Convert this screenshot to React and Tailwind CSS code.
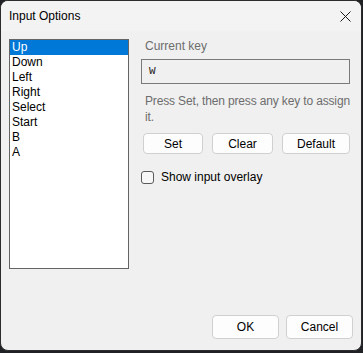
const KEYS = ["Up", "Down", "Left", "Right", "Select", "Start", "B", "A"];

function CloseGlyph() {
  return (
    <svg width="11" height="11" viewBox="0 0 11 11" className="block">
      <path d="M0.5 0.5 L10.5 10.5 M10.5 0.5 L0.5 10.5" stroke="#1a1a1a" strokeWidth="1" fill="none" />
    </svg>
  );
}

function Btn({ children, className = "" }) {
  return (
    <button
      className={`flex items-center justify-center rounded-[4px] border border-[#d0d0d0] bg-[#fdfdfd] text-[12px] text-black ${className}`}
    >
      {children}
    </button>
  );
}

export default function App() {
  const selected = 0;
  return (
    <div
      className="h-[353px] w-[363px] bg-[#202124]"
      style={{ fontFamily: '"Liberation Sans", Arial, sans-serif' }}
    >
      <div className="flex h-[351px] w-[362px] flex-col overflow-hidden rounded-[8px] border border-[#2c2c2c] bg-[#f0f0f0]">
        {/* title bar */}
        <div className="flex h-[30px] shrink-0 items-center justify-between bg-[#f3f3f3] pl-2 pr-[10px]">
          <span className="text-[12px] text-black">Input Options</span>
          <CloseGlyph />
        </div>

        {/* body */}
        <div className="flex flex-1 flex-col">
          <div className="flex pl-2 pt-2">
            <ul className="h-[230px] w-[120px] shrink-0 border border-[#646464] bg-white">
              {KEYS.map((k, i) => (
                <li
                  key={k}
                  className={`h-[15px] pl-[2px] text-[12px] leading-[15px] ${
                    i === selected ? "bg-[#0078d7] text-white" : "text-black"
                  }`}
                >
                  {k}
                </li>
              ))}
            </ul>

            <div className="ml-3 flex w-[209px] flex-col">
              <div className="pl-1 text-[12px] leading-[15px] text-[#6d6d6d]">Current key</div>
              <div className="mt-[5px] flex h-[25px] items-center border border-[#7a7a7a] bg-[#f0f0f0] pl-[7px]">
                <span className="text-[11px] text-[#1a1a1a]" style={{ fontFamily: '"Liberation Mono", monospace' }}>
                  W
                </span>
              </div>
              <div className="mt-[9px] whitespace-nowrap pl-1 text-[12px] leading-[16px] tracking-[-0.15px] text-[#6d6d6d]">
                Press Set, then press any key to assign
                <br />
                it.
              </div>
              <div className="ml-[2px] mt-2 flex gap-[9px]">
                <Btn className="h-[21px] w-[60px]">Set</Btn>
                <Btn className="h-[21px] w-[61px]">Clear</Btn>
                <Btn className="h-[21px] w-[68px]">Default</Btn>
              </div>
              <label className="mt-[14px] flex items-center gap-[7px]">
                <span className="h-[13px] w-[13px] rounded-[3px] border border-[#5a5a5a] bg-[#f7f7f7]" />
                <span className="text-[12px] text-black">Show input overlay</span>
              </label>
            </div>
          </div>

          <div className="flex-1" />

          <div className="flex justify-end gap-[7px] pb-[11px] pr-2">
            <Btn className="h-[24px] w-[67px]">OK</Btn>
            <Btn className="h-[24px] w-[67px]">Cancel</Btn>
          </div>
        </div>
      </div>
    </div>
  );
}
